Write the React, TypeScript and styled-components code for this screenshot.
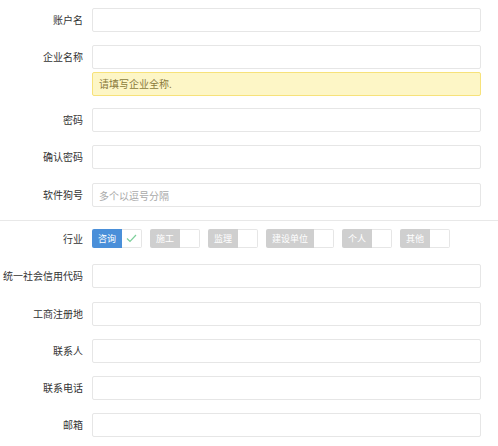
import styled, { createGlobalStyle } from 'styled-components'

const GlobalStyle = createGlobalStyle`
  body {
    margin: 0;
    background: #fff;
    font-family: "Noto Sans CJK SC", "Noto Sans", sans-serif;
  }
`

const Form = styled.div`
  width: 498px;
  padding-top: 8px;
  box-sizing: border-box;
`

const Section = styled.div`
  padding-right: 17px;
`

const Row = styled.div<{ $gap?: number }>`
  display: grid;
  grid-template-columns: 83px 389px;
  column-gap: 9px;
  align-items: start;
  margin-bottom: ${(p) => p.$gap ?? 13}px;
`

const Label = styled.div<{ $h?: number }>`
  height: ${(p) => p.$h ?? 24}px;
  line-height: ${(p) => p.$h ?? 24}px;
  text-align: right;
  font-size: 10px;
  color: #333;
  white-space: nowrap;
`

const Field = styled.div`
  display: flex;
  flex-direction: column;
  gap: 3px;
`

const Input = styled.input`
  display: block;
  box-sizing: border-box;
  width: 389px;
  height: 24px;
  margin: 0;
  padding: 0 6px;
  border: 1px solid #e6e6e6;
  border-radius: 2px;
  font-family: inherit;
  font-size: 10px;
  color: #333;
  outline: none;
  &::placeholder {
    color: #a9a9a9;
  }
`

const Alert = styled.div`
  box-sizing: border-box;
  height: 24px;
  line-height: 22px;
  padding: 0 6px;
  background: #fdf6c6;
  border: 1px solid #f7e27a;
  border-radius: 2px;
  font-size: 10px;
  color: #8a7a3c;
`

const Divider = styled.hr`
  margin: 0 0 8px;
  border: 0;
  border-top: 1px solid #e8e8e8;
`

const ToggleRow = styled.div`
  display: flex;
  gap: 8px;
  align-items: center;
  height: 19px;
`

const Toggle = styled.div`
  display: flex;
  height: 19px;
  cursor: pointer;
`

const ToggleText = styled.span<{ $on: boolean }>`
  display: flex;
  align-items: center;
  padding: 0 6px;
  border-radius: 2px 0 0 2px;
  background: ${(p) => (p.$on ? '#4a8fd9' : '#cfcfcf')};
  color: #fff;
  font-size: 9px;
  white-space: nowrap;
`

const ToggleBox = styled.span`
  box-sizing: border-box;
  width: 20px;
  display: flex;
  align-items: center;
  justify-content: center;
  border: 1px solid #e6e6e6;
  border-left: 0;
  border-radius: 0 2px 2px 0;
  background: #fff;
`

const Check = () => (
  <svg width="11" height="9" viewBox="0 0 11 9">
    <polyline points="1,4.5 4,7.5 10,1" fill="none" stroke="#7ccf9a" strokeWidth="1.2" />
  </svg>
)

const industries = [
  { name: '咨询', on: true },
  { name: '施工', on: false },
  { name: '监理', on: false },
  { name: '建设单位', on: false },
  { name: '个人', on: false },
  { name: '其他', on: false },
]

const TextRow = (props: { label: string; placeholder?: string; gap?: number }) => (
  <Row $gap={props.gap}>
    <Label>{props.label}</Label>
    <Input placeholder={props.placeholder} />
  </Row>
)

export default function App() {
  return (
    <>
      <GlobalStyle />
      <Form>
        <Section>
          <TextRow label="账户名" />
          <Row $gap={12}>
            <Label>企业名称</Label>
            <Field>
              <Input />
              <Alert>请填写企业全称.</Alert>
            </Field>
          </Row>
          <TextRow label="密码" />
          <TextRow label="确认密码" gap={14} />
          <TextRow label="软件狗号" placeholder="多个以逗号分隔" />
        </Section>
        <Divider />
        <Section>
          <Row $gap={16}>
            <Label $h={19}>行业</Label>
            <ToggleRow>
              {industries.map((it) => (
                <Toggle key={it.name}>
                  <ToggleText $on={it.on}>{it.name}</ToggleText>
                  <ToggleBox>{it.on && <Check />}</ToggleBox>
                </Toggle>
              ))}
            </ToggleRow>
          </Row>
          <TextRow label="统一社会信用代码" gap={14} />
          <TextRow label="工商注册地" />
          <TextRow label="联系人" />
          <TextRow label="联系电话" />
          <TextRow label="邮箱" />
        </Section>
      </Form>
    </>
  )
}
